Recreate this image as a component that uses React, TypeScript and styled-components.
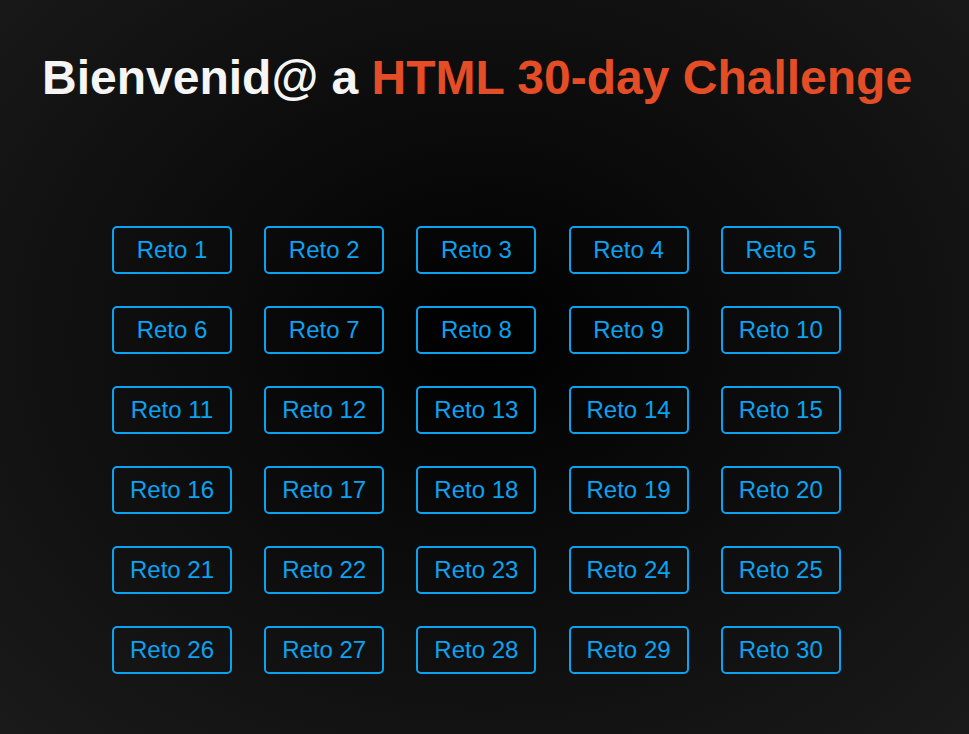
import React from "react";
import styled, { createGlobalStyle } from "styled-components";

const Global = createGlobalStyle`
  html, body { margin: 0; padding: 0; }
  body {
    font-family: "Liberation Sans", Arial, sans-serif;
    background: radial-gradient(ellipse at 50% 46%, #000000 0%, #0a0a0a 35%, #1a1a1a 100%);
    min-height: 734px;
  }
`;

const Page = styled.main`
  min-height: 734px;
  box-sizing: border-box;
  padding: 50px 0 0 42px;
`;

const Title = styled.h1`
  margin: 0;
  font-size: 48px;
  font-weight: 700;
  line-height: 56px;
  color: #f5f5f5;
`;

const Accent = styled.span`
  color: #e44d26;
`;

const Grid = styled.div`
  display: grid;
  grid-template-columns: repeat(5, 120px);
  column-gap: 32.2px;
  row-gap: 32px;
  margin: 120px 0 0 70px;
`;

const Button = styled.a`
  box-sizing: border-box;
  width: 120px;
  height: 48px;
  display: flex;
  align-items: center;
  justify-content: center;
  border: 2px solid #0aa3f2;
  border-radius: 5px;
  color: #0aa3f2;
  font-size: 24px;
  text-decoration: none;
  cursor: pointer;
`;

export default function App() {
  return (
    <>
      <Global />
      <Page>
        <Title>
          Bienvenid@ a <Accent>HTML 30-day Challenge</Accent>
        </Title>
        <Grid>
          {Array.from({ length: 30 }, (_, i) => (
            <Button key={i}>Reto {i + 1}</Button>
          ))}
        </Grid>
      </Page>
    </>
  );
}
